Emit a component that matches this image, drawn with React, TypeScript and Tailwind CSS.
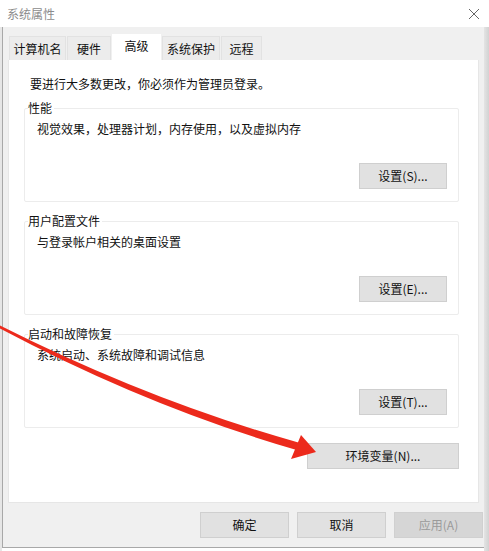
import React from 'react';

const font = { fontFamily: '"Noto Sans CJK SC", "Noto Sans", sans-serif' };

const tabs = [
  { label: "计算机名", w: "w-[57px]" },
  { label: "硬件", w: "w-[44px]" },
  { label: "高级", w: "w-[49px]" },
  { label: "系统保护", w: "w-[58px]" },
  { label: "远程", w: "w-[41px]" },
];

function Btn({ label, className = "", disabled = false }: { label: string; className?: string; disabled?: boolean }) {
  return (
    <div
      className={
        "h-[26px] flex items-center justify-center text-[12px] border " +
        (disabled
          ? "bg-[#d6d6d6] border-[#d0d0d0] text-[#9a9a9a] "
          : "bg-[#e1e1e1] border-[#cfcfcf] text-[#111] ") +
        className
      }
    >
      {label}
    </div>
  );
}

function Group({ title, desc, btn }: { title: string; desc: string; btn: string }) {
  return (
    <div className="relative ml-[15px] mr-[19px] border border-[#ececec] rounded-[2px] h-[94px] pt-[12px] pl-[12px] pr-[11px] flex flex-col">
      <div className="absolute -top-[9px] left-[3px] bg-white pr-[2px] text-[12px] leading-[16px] text-[#111]">
        {title}
      </div>
      <div className="text-[12px] leading-[16px] text-[#111]">{desc}</div>
      <div className="flex justify-end mt-[26px]">
        <Btn label={btn} className="w-[88px]" />
      </div>
    </div>
  );
}

export default function App() {
  return (
    <div className="relative w-[489px] h-[551px] bg-white overflow-hidden flex flex-col" style={font}>
      <div className="h-[27px] flex items-center justify-between pl-[7px] pr-[8px]">
        <span className="text-[12px] text-[#8c8c8c]">系统属性</span>
        <svg width="12" height="12" viewBox="0 0 12 12" className="mr-[1px]">
          <path d="M1 1 L11 11 M11 1 L1 11" stroke="#666" strokeWidth="1" />
        </svg>
      </div>

      <div className="flex-1 flex">
        <div className="w-[2px] bg-[#e6e6e6]" />
        <div className="flex-1 flex flex-col bg-[#f0f0f0] border-l border-[#a8a8a8] border-b border-b-[#a8a8a8] mb-[3px]">
          <div className="flex items-end h-[33px] pl-[6px]">
            {tabs.map((t, i) =>
              i === 2 ? (
                <div key={t.label} className={t.w + " h-[26px] mr-[1px] bg-white flex justify-center items-start pt-[3px] text-[12px] text-[#111]"}>
                  {t.label}
                </div>
              ) : (
                <div key={t.label} className={t.w + " h-[24px] mr-[1px] bg-[#ececec] border border-b-0 border-[#e2e2e2] flex justify-center items-center text-[12px] text-[#111]"}>
                  {t.label}
                </div>
              )
            )}
          </div>

          <div className="bg-white ml-[5px] mr-[5px] h-[443px] border border-[#e6e6e6] border-t-0 flex flex-col">
            <div className="text-[12px] leading-[16px] text-[#111] pl-[21px] pt-[16px]">
              要进行大多数更改，你必须作为管理员登录。
            </div>
            <div className="mt-[16px] flex flex-col gap-[19px]">
              <Group title="性能" desc="视觉效果，处理器计划，内存使用，以及虚拟内存" btn="设置(S)..." />
              <Group title="用户配置文件" desc="与登录帐户相关的桌面设置" btn="设置(E)..." />
              <Group title="启动和故障恢复" desc="系统启动、系统故障和调试信息" btn="设置(T)..." />
            </div>
            <div className="flex justify-end mr-[19px] mt-[15px]">
              <Btn label="环境变量(N)..." className="w-[152px]" />
            </div>
          </div>

          <div className="flex justify-end gap-[8px] pt-[9px] pr-[1px]">
            <Btn label="确定" className="w-[89px]" />
            <Btn label="取消" className="w-[89px]" />
            <Btn label="应用(A)" className="w-[89px]" disabled />
          </div>
        </div>
        <div className="w-[5px] bg-gradient-to-r from-[#e4e4e4] to-[#d2d2d2]" />
      </div>

      <svg className="absolute inset-0 pointer-events-none" width="489" height="551" viewBox="0 0 489 551">
        <path fill="#ec2a1c" d="M0,325.5 Q150,401 300,443 L300,451 Q150,408 0,328.5 Z" />
        <polygon fill="#ec2a1c" points="316,452 301,435 291,459" />
      </svg>
    </div>
  );
}
